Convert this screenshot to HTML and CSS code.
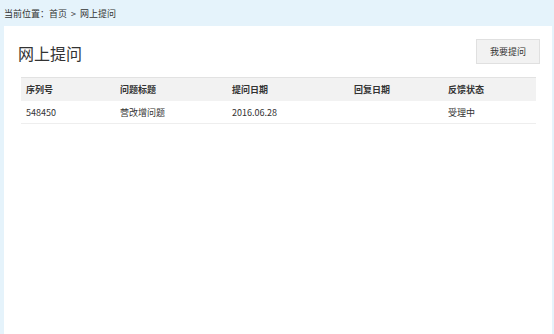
FILE: index.html
```html
<!DOCTYPE html>
<html lang="zh-CN">
<head>
    <meta charset="UTF-8">
    <title>网上提问</title>
    <link rel="stylesheet" href="styles.css">
</head>
<body>
    <div class="crumb">当前位置：首页 &nbsp;&gt;&nbsp; 网上提问</div>
    <div class="panel">
        <div class="panel-head">
            <h1>网上提问</h1>
            <button class="btn">我要提问</button>
        </div>
        <table class="list">
            <thead>
                <tr>
                    <th class="c1">序列号</th>
                    <th class="c2">问题标题</th>
                    <th class="c3">提问日期</th>
                    <th class="c4">回复日期</th>
                    <th>反馈状态</th>
                </tr>
            </thead>
            <tbody>
                <tr>
                    <td>548450</td>
                    <td>营改增问题</td>
                    <td>2016.06.28</td>
                    <td></td>
                    <td>受理中</td>
                </tr>
            </tbody>
        </table>
    </div>
</body>
</html>
```

FILE: styles.css
```css
body {
    margin: 0;
    background-color: #e5f3fb;
    font-family: "Noto Sans CJK SC", "Noto Sans", sans-serif;
    color: #333;
    font-size: 9px;
}
.crumb {
    height: 26px;
    line-height: 28px;
    padding-left: 4px;
}
.panel {
    margin: 0 2px 0 4px;
    background-color: #fff;
    height: 308px;
    box-sizing: border-box;
    padding: 13px 12px 0 14px;
}
.panel-head {
    display: flex;
    justify-content: space-between;
    align-items: flex-start;
}
h1 {
    margin: 3px 0 0 0;
    font-size: 16px;
    font-weight: normal;
    line-height: 22px;
}
.btn {
    width: 64px;
    height: 25px;
    padding: 0;
    background-color: #f2f2f2;
    border: 1px solid #e0e0e0;
    font-family: inherit;
    font-size: 9px;
    color: #333;
}
.list {
    width: 515px;
    margin: 13px 0 0 3px;
    border-collapse: collapse;
}
.list th,
.list td {
    text-align: left;
    padding: 0 5px;
    font-size: 9px;
}
.list th {
    height: 23px;
    background-color: #f2f2f2;
    border-top: 1px solid #e2e2e2;
    font-weight: bold;
}
.list td {
    height: 22px;
    border-bottom: 1px solid #eee;
}
.c1 { width: 84px; }
.c2 { width: 102px; }
.c3 { width: 112px; }
.c4 { width: 84px; }
```
